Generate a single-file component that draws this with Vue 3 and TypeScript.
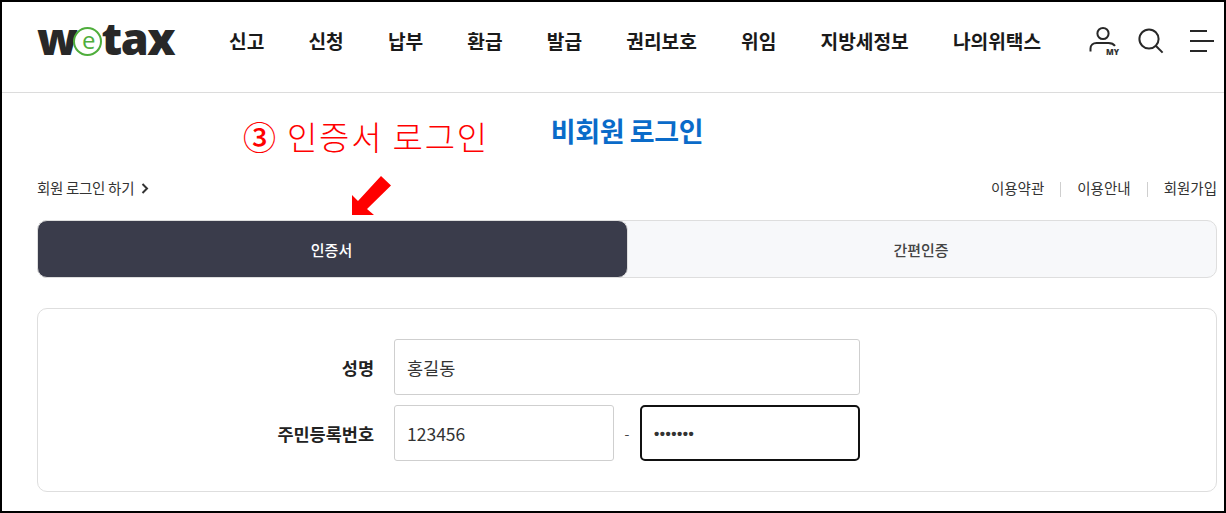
<template>
  <div class="frame">
    <header class="top">
      <div class="logo"><span>w</span><span class="logo-e"><i>e</i></span><span>tax</span></div>
      <nav class="gnb">
        <a v-for="item in menus" :key="item">{{ item }}</a>
      </nav>
      <div class="utils">
        <span class="my">
          <svg width="30" height="30" viewBox="0 0 30 30" fill="none" stroke="#282828" stroke-width="2">
            <circle cx="14" cy="7.5" r="5.6" />
            <path d="M1.5 25.5v-3c0-3.4 2.6-5.6 6-5.6h12c2.6 0 5 .8 6.5 3" />
          </svg>
          <b>MY</b>
        </span>
        <svg class="search" width="26" height="26" viewBox="0 0 26 26" fill="none" stroke="#282828" stroke-width="2">
          <circle cx="11" cy="11" r="9.6" />
          <path d="M18 18l6.6 6.6" />
        </svg>
        <span class="burger"><i></i><i class="long"></i><i></i></span>
      </div>
    </header>

    <main class="content">
      <h1 class="title">비회원 로그인</h1>
      <div class="annotation"><span class="num">③</span> 인증서 로그인</div>
      <svg class="arrow" width="42" height="42" viewBox="0 0 42 42">
        <path fill="#ff0000" d="M1 40V20l6 6L30 1l10 9.500L16 34l7 6z" />
      </svg>

      <div class="sub-row">
        <a class="member">회원 로그인 하기
          <svg width="8" height="11" viewBox="0 0 8 11" fill="none" stroke="#333" stroke-width="2"><path d="M1.500 1l4.500 4.500-4.500 4.500" /></svg>
        </a>
        <ul class="links">
          <li v-for="link in links" :key="link">{{ link }}</li>
        </ul>
      </div>

      <div class="tabs">
        <button class="tab active">인증서</button>
        <button class="tab">간편인증</button>
      </div>

      <section class="form-card">
        <div class="form-row">
          <label>성명</label>
          <div class="field wide">홍길동</div>
        </div>
        <div class="form-row">
          <label>주민등록번호</label>
          <div class="field half">123456</div>
          <span class="dash">-</span>
          <div class="field half focus"><span class="dots">•••••••</span></div>
        </div>
      </section>
    </main>
  </div>
</template>

<script setup lang="ts">
const menus: string[] = ['신고', '신청', '납부', '환급', '발급', '권리보호', '위임', '지방세정보', '나의위택스']
const links: string[] = ['이용약관', '이용안내', '회원가입']
</script>

<style>
html,
body {
  margin: 0;
  background: #fff;
  overflow: hidden;
}
</style>

<style scoped>
.frame {
  box-sizing: border-box;
  width: 1226px;
  height: 513px;
  border: 2px solid #000;
  background: #fff;
  overflow: hidden;
  font-family: "Noto Sans CJK KR", "Noto Sans", sans-serif;
  color: #222;
}

.top {
  display: flex;
  align-items: center;
  height: 91px;
  box-sizing: border-box;
  padding-left: 35px;
  border-bottom: 1px solid #dcdcdc;
}

.logo {
  display: flex;
  align-items: center;
  width: 140px;
  height: 40px;
  margin-top: -18px;
  font-family: "Open Sans", sans-serif;
  font-weight: 800;
  font-size: 45px;
  line-height: 40px;
  letter-spacing: -1.5px;
  color: #282828;
}

.logo-e {
  display: flex;
  align-items: center;
  justify-content: center;
  box-sizing: border-box;
  width: 29px;
  height: 29px;
  margin: 6px -1px 0 -3px;
  border: 2px solid #4fae3c;
  border-radius: 50%;
  background: #fff;
}

.logo-e i {
  font-style: normal;
  font-weight: 400;
  font-size: 24px;
  line-height: 24px;
  margin-top: -3px;
  color: #4fae3c;
}

.gnb {
  display: flex;
  gap: 44.15px;
  margin-left: 52px;
  margin-top: -13px;
}

.gnb a {
  font-size: 19.2px;
  font-weight: 700;
  line-height: 26px;
  color: #1a1a1a;
  white-space: nowrap;
}

.utils {
  display: flex;
  align-items: center;
  margin-left: auto;
  margin-right: 10px;
  margin-top: -13px;
}

.my {
  position: relative;
  display: block;
  width: 30px;
  height: 30px;
  margin-right: 19px;
}

.my b {
  position: absolute;
  right: 0;
  bottom: 0;
  padding-left: 2px;
  background: #fff;
  font-family: "Open Sans", sans-serif;
  font-size: 8px;
  line-height: 9px;
  font-weight: 800;
  color: #333;
}

.search {
  margin-right: 26px;
}

.burger {
  display: flex;
  flex-direction: column;
  gap: 8px;
  width: 24px;
}

.burger i {
  display: block;
  width: 17px;
  height: 2px;
  background: #282828;
}

.burger i.long {
  width: 24px;
}

.content {
  position: relative;
  padding: 0 7px 0 35px;
}

.title {
  margin: 0;
  padding-top: 20px;
  text-align: center;
  font-size: 27px;
  line-height: 36px;
  font-weight: 700;
  letter-spacing: -0.4px;
  color: #0a6bc9;
}

.annotation {
  position: absolute;
  left: 241px;
  top: 19px;
  font-size: 33px;
  line-height: 48px;
  font-weight: 300;
  letter-spacing: 1.800px;
  color: #ff0000;
  white-space: nowrap;
}

.num {
  font-weight: 500;
}

.arrow {
  position: absolute;
  left: 349px;
  top: 82px;
}

.sub-row {
  display: flex;
  justify-content: space-between;
  align-items: center;
  margin-top: 26px;
  height: 24px;
  font-size: 14.5px;
  color: #333;
}

.member {
  display: flex;
  align-items: center;
  gap: 7px;
  letter-spacing: -0.3px;
}

.member svg {
  margin-top: 2px;
}

.links {
  display: flex;
  margin: 0;
  padding: 0;
  list-style: none;
}

.links li {
  position: relative;
  padding-left: 33px;
  letter-spacing: 0;
}

.links li + li::before {
  content: "";
  position: absolute;
  left: 16px;
  top: 5px;
  width: 1px;
  height: 15px;
  background: #cfcfcf;
}

.tabs {
  display: flex;
  height: 58px;
  margin-top: 21px;
  box-sizing: border-box;
  border: 1px solid #dedede;
  border-radius: 10px;
  background: #f7f8fa;
}

.tab {
  flex: 1;
  border: 0;
  padding: 0 2px 0 0;
  background: none;
  font: inherit;
  font-size: 15px;
  font-weight: 500;
  color: #444;
}

.tab.active {
  flex: none;
  width: 591px;
  margin: -1px 0 -1px -1px;
  border-radius: 10px;
  background: #3a3c4b;
  border: 1px solid #dedede;
  color: #fff;
}

.form-card {
  display: flex;
  flex-direction: column;
  gap: 10px;
  box-sizing: border-box;
  height: 184px;
  margin-top: 30px;
  padding-top: 30px;
  border: 1px solid #dedede;
  border-radius: 10px;
}

.form-row {
  display: flex;
  align-items: center;
}

.form-row label {
  width: 336px;
  margin-right: 20px;
  text-align: right;
  font-size: 17.5px;
  font-weight: 700;
  color: #222;
}

.field {
  box-sizing: border-box;
  display: flex;
  align-items: center;
  height: 56px;
  padding: 0 12px;
  border: 1px solid #cfcfcf;
  border-radius: 3px;
  font-size: 17.5px;
  color: #333;
}

.wide {
  width: 466px;
}

.half {
  width: 220px;
}

.focus {
  border: 2px solid #111;
  border-radius: 5px;
}

.dots {
  font-family: "Liberation Sans", sans-serif;
  font-size: 15px;
  font-weight: 700;
  letter-spacing: 0.500px;
}

.dash {
  width: 26px;
  text-align: center;
  font-size: 14px;
  color: #444;
}
</style>
